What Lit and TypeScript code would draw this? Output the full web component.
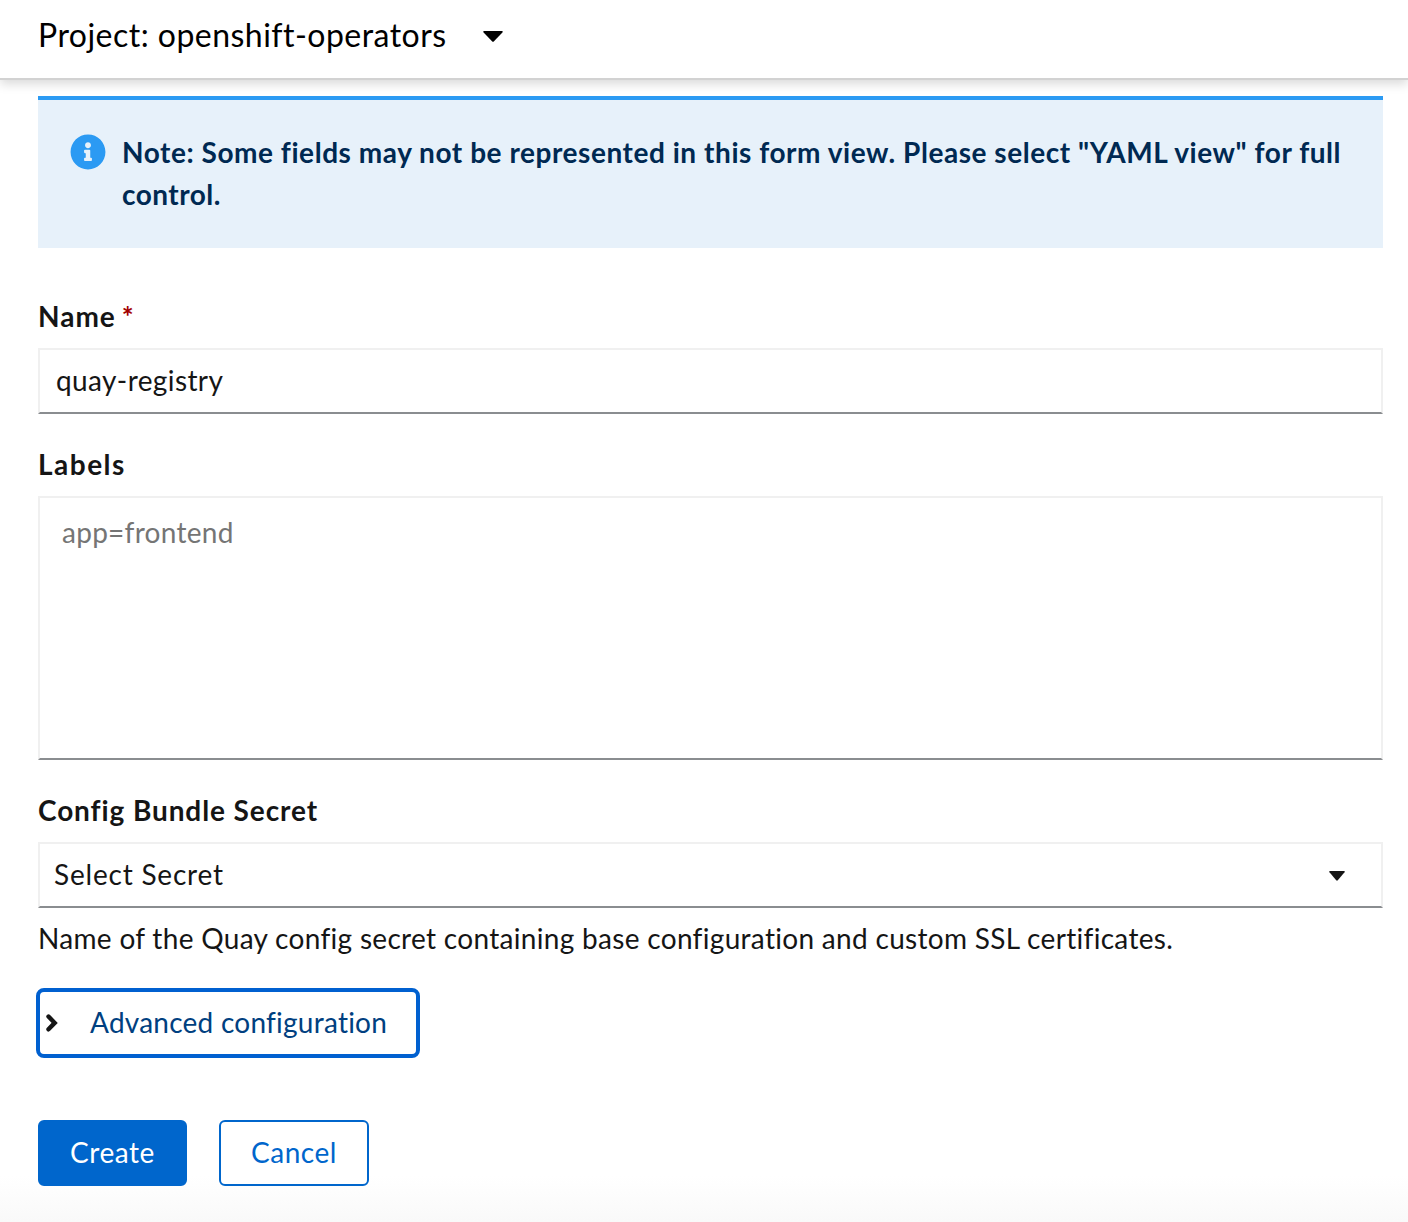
import { LitElement, html, css } from "lit";
import { customElement } from "lit/decorators.js";

@customElement("app-root")
export class AppRoot extends LitElement {
  static styles = css`
    :host {
      display: block;
      height: 1222px;
      overflow: hidden;
      box-sizing: border-box;
      font-family: Lato, "Open Sans", sans-serif;
      font-size: 28px;
      line-height: 42px;
      font-variant-ligatures: none;
      color: #151515;
      background: linear-gradient(#fff 0, #fff 1176px, #f9f9f9 1222px);
    }
    * {
      box-sizing: border-box;
    }
    span,
    div,
    button {
      white-space: nowrap;
    }
    button {
      font: inherit;
      font-variant-ligatures: none;
      margin: 0;
      text-align: left;
      background: #fff;
    }
    svg {
      display: block;
      flex: none;
    }
    .bar {
      display: flex;
      align-items: flex-start;
      height: 80px;
      padding: 11px 38px 0;
      border-bottom: 2px solid #d2d2d2;
      background: #fff;
      box-shadow: 0 4px 10px rgba(3, 3, 3, 0.15);
      color: #000;
      font-size: 32px;
      line-height: 48px;
    }
    .project {
      width: 445px;
      letter-spacing: 0.47px;
    }
    .bar svg {
      margin-top: 20px;
    }
    .content {
      padding: 16px 25px 0 38px;
    }
    .alert {
      display: flex;
      height: 152px;
      padding: 31px 32px 0;
      border-top: 4px solid #2b9af3;
      background: #e7f1fa;
      color: #002952;
      font-weight: 700;
    }
    .alert svg {
      margin: 3px 16px 0 0;
    }
    .line {
      display: block;
    }
    .note-lead {
      letter-spacing: 0.55px;
    }
    .note-tail {
      letter-spacing: 0.47px;
    }
    .label {
      display: flex;
      height: 53px;
      font-weight: 700;
    }
    .first {
      margin-top: 47px;
    }
    .name {
      letter-spacing: 1px;
    }
    .labels {
      letter-spacing: 1.5px;
    }
    .config {
      letter-spacing: 0.9px;
    }
    .star {
      margin-left: 6px;
      color: #a30000;
    }
    .box {
      display: flex;
      justify-content: space-between;
      width: 100%;
      height: 66px;
      margin-bottom: 29px;
      padding: 9px 16px 0;
      border: 2px solid #f0f0f0;
      border-bottom-color: #8a8d90;
      background: #fff;
      letter-spacing: 0.39px;
    }
    .area {
      height: 264px;
      padding: 13px 22px 0;
      color: #757575;
      letter-spacing: 0.27px;
    }
    .select {
      margin-bottom: 9px;
      padding: 9px 36px 0 14px;
      color: #151515;
      letter-spacing: 0.8px;
    }
    .select svg {
      margin-top: 18px;
    }
    .help {
      margin-bottom: 29px;
      letter-spacing: 0.31px;
    }
    .advanced {
      display: flex;
      width: 384px;
      height: 70px;
      margin-left: -2px;
      padding: 9px 0 0 6px;
      border: 4px solid #0060d0;
      border-radius: 8px;
      color: #004080;
      letter-spacing: 0.24px;
    }
    .advanced svg {
      margin: 12px 32px 0 0;
    }
    .actions {
      display: flex;
      gap: 32px;
      margin-top: 62px;
    }
    .btn {
      width: 149px;
      height: 66px;
      padding: 0 0 2px;
      border: 2px solid #0066cc;
      border-radius: 6px;
      text-align: center;
      line-height: 42px;
      letter-spacing: 0.55px;
      color: #0066cc;
    }
    .primary {
      background: #0066cc;
      color: #fff;
    }
    .cancel {
      width: 150px;
    }
  `;

  private caret(w: number, h: number, color: string) {
    return html`<svg width=${w} height=${h} viewBox="0 0 20 11" preserveAspectRatio="none">
      <path fill=${color} d="M1.2 0H18.8Q20.4 .2 19.4 1.5L11 10.2Q10 11.2 9 10.2L.6 1.5Q-.4 .2 1.2 0Z" />
    </svg>`;
  }

  render() {
    return html`
      <div class="bar">
        <div class="project">Project: openshift-operators</div>
        ${this.caret(20, 11, "#000")}
      </div>
      <div class="content">
        <div class="alert">
          <svg width="36" height="36" viewBox="0 0 512 512">
            <path
              fill="#2b9af3"
              d="M256 8C119 8 8 119 8 256s111 248 248 248 248-111 248-248S393 8 256 8zm0 110c23.200 0 42 18.800 42 42s-18.800 42-42 42-42-18.800-42-42 18.800-42 42-42zm56 254c0 6.600-5.400 12-12 12h-88c-6.600 0-12-5.400-12-12v-24c0-6.600 5.400-12 12-12h12v-64h-12c-6.600 0-12-5.400-12-12v-24c0-6.600 5.400-12 12-12h64c6.600 0 12 5.400 12 12v100h12c6.600 0 12 5.400 12 12z"
            />
          </svg>
          <div>
            <span class="line note-lead">Note: Some fields may not be represented in this form view. Please select "YAML view" for full</span>
            <span class="line note-tail">control.</span>
          </div>
        </div>

        <div class="label first"><span class="name">Name</span><span class="star">*</span></div>
        <div class="box"><span>quay-registry</span></div>

        <div class="label"><span class="labels">Labels</span></div>
        <div class="box area"><span>app=frontend</span></div>

        <div class="label"><span class="config">Config Bundle Secret</span></div>
        <button class="box select">
          <span>Select Secret</span>
          ${this.caret(16, 10, "#151515")}
        </button>
        <div class="help">Name of the Quay config secret containing base configuration and custom SSL certificates.</div>

        <button class="advanced">
          <svg width="12" height="20" viewBox="0 0 12 20">
            <path
              d="M2.500 3.500L8.700 9.900L2.500 16.300"
              fill="none"
              stroke="#151515"
              stroke-width="4.400"
              stroke-linecap="round"
            />
          </svg>
          <span>Advanced configuration</span>
        </button>

        <div class="actions">
          <button class="btn primary">Create</button>
          <button class="btn cancel">Cancel</button>
        </div>
      </div>
    `;
  }
}
